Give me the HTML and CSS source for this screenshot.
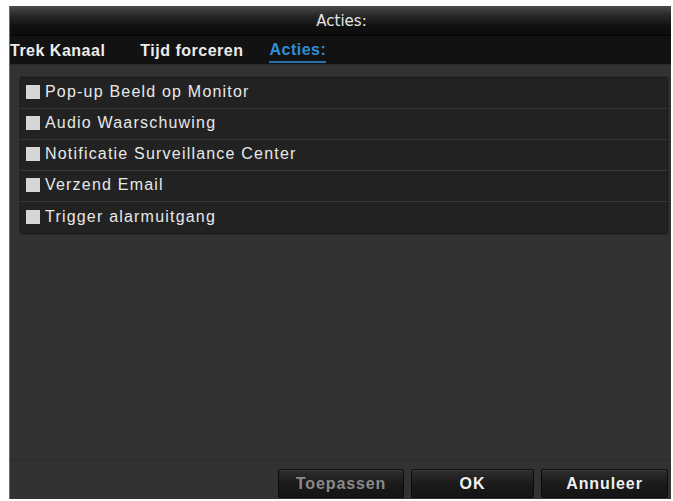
FILE: index.html
```html
<!DOCTYPE html>
<html lang="nl">
<head>
<meta charset="utf-8">
<title>Acties</title>
<link rel="stylesheet" href="styles.css">
</head>
<body>
<div class="dialog">
  <div class="titlebar">Acties:</div>
  <div class="tabs">
    <span class="tab tab-1">Trek Kanaal</span>
    <span class="tab tab-2">Tijd forceren</span>
    <span class="tab tab-3 active">Acties:</span>
  </div>
  <div class="content">
    <div class="list">
      <div class="row"><span class="check"></span><span class="label">Pop-up Beeld op Monitor</span></div>
      <div class="row"><span class="check"></span><span class="label">Audio Waarschuwing</span></div>
      <div class="row"><span class="check"></span><span class="label">Notificatie Surveillance Center</span></div>
      <div class="row"><span class="check"></span><span class="label">Verzend Email</span></div>
      <div class="row"><span class="check"></span><span class="label">Trigger alarmuitgang</span></div>
    </div>
  </div>
  <div class="footer">
    <button class="btn btn-apply disabled">Toepassen</button>
    <button class="btn btn-ok">OK</button>
    <button class="btn btn-cancel">Annuleer</button>
  </div>
</div>
</body>
</html>
```
FILE: styles.css
```css
html, body {
  margin: 0;
  padding: 0;
  background: #ffffff;
}
body {
  width: 673px;
  height: 501px;
  overflow: hidden;
  font-family: "Liberation Sans", Arial, sans-serif;
}
.dialog {
  margin: 6px 0 0 9px;
  width: 662px;
  height: 493px;
  display: flex;
  flex-direction: column;
  background: #323232;
  border-left: 1px solid #6a6a6a;
  box-sizing: border-box;
}
.titlebar {
  height: 30px;
  flex: none;
  display: flex;
  align-items: center;
  justify-content: center;
  font-family: "DejaVu Sans", sans-serif;
  font-size: 15px;
  color: #e4e4e4;
  background: linear-gradient(#4a4a4a 0%, #262626 35%, #111111 70%, #0c0c0c 100%);
  border-bottom: 1px solid #050505;
  box-sizing: border-box;
  padding-left: 2px;
}
.tabs {
  height: 29px;
  flex: none;
  display: flex;
  align-items: center;
  background: #121212;
  border-bottom: 1px solid #2a2a2a;
  box-sizing: border-box;
  font-weight: bold;
  font-size: 16px;
  letter-spacing: 0.5px;
  color: #ececec;
  padding-top: 2px;
}
.tab {
  display: inline-block;
  line-height: 20px;
  padding-bottom: 1px;
}
.tab-1 { margin-left: 0; }
.tab-2 { margin-left: 35px; }
.tab-3 { margin-left: 26px; }
.tab.active {
  color: #2f8fd4;
  border-bottom: 2px solid #2a6fa6;
}
.content {
  flex: 1;
  padding: 12px 3px 0 10px;
}
.list {
  background: #222222;
  border: 1px solid #1a1a1a;
  border-radius: 2px;
  box-shadow: 0 0 0 1px #2b2b2b;
}
.row {
  height: 30px;
  display: flex;
  align-items: center;
  border-bottom: 1px solid #3a3a3a;
  padding-left: 5px;
  padding-bottom: 2px;
  box-sizing: border-box;
  height: 31px;
}
.row:last-child {
  border-bottom: none;
}
.check {
  width: 14px;
  height: 14px;
  background: #d6d6d6;
  flex: none;
  margin-right: 5px;
}
.label {
  font-size: 16px;
  letter-spacing: 1.2px;
  color: #e8e8e8;
}
.footer {
  height: 39px;
  flex: none;
  display: flex;
  align-items: flex-end;
  justify-content: flex-end;
  gap: 7px;
  padding: 0 3px 1px 0;
  border-top: 1px solid #2a2a2a;
  box-sizing: border-box;
}
.btn {
  height: 29px;
  border: 1px solid #0d0d0d;
  background: linear-gradient(#2e2e2e, #1b1b1b 50%, #141414);
  box-shadow: inset 0 1px 0 #3a3a3a;
  color: #f0f0f0;
  font-family: "Liberation Sans", Arial, sans-serif;
  font-weight: bold;
  font-size: 16px;
  letter-spacing: 0.9px;
  padding: 0;
  border-radius: 2px;
}
.btn-apply { width: 126px; color: #8a8a8a; }
.btn-ok { width: 123px; }
.btn-cancel { width: 127px; }
```
